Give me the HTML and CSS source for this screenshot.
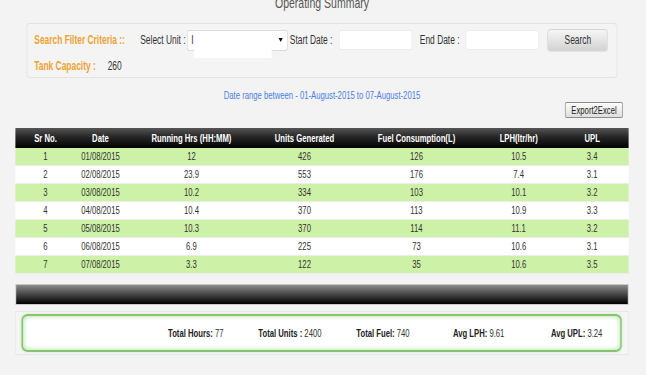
FILE: index.html
```html
<!DOCTYPE html>
<html lang="en">

<head>
    <meta charset="UTF-8">
    <meta name="viewport" content="width=device-width, initial-scale=1.0">
    <title>Operating Summary</title>
    <link rel="stylesheet" href="styles.css">
</head>

<body>
    <div class="page">
        <div class="page-title">Operating Summary</div>

        <div class="filter">
            <div class="filter-row">
                <span class="filter-label">Search Filter Criteria ::</span>
                <span class="field-label unit-label">Select Unit :</span>
                <div class="select">
                    <span class="select-text">I</span>
                    <span class="select-arrow"></span>
                    <div class="select-mask"></div>
                </div>
                <span class="field-label start-label">Start Date :</span>
                <input type="text" class="date-input">
                <span class="field-label end-label">End Date :</span>
                <input type="text" class="date-input">
                <button class="btn-search">Search</button>
            </div>
            <div class="filter-row tank-row">
                <span class="filter-label">Tank Capacity :</span>
                <span class="tank-value">260</span>
            </div>
        </div>

        <div class="date-range">Date range between - 01-August-2015 to 07-August-2015</div>

        <div class="export-row">
            <button class="btn-export">Export2Excel</button>
        </div>

        <div class="report-wrap">
            <table class="report">
                <colgroup>
                    <col style="width: 86px">
                    <col style="width: 71px">
                    <col style="width: 189px">
                    <col style="width: 134px">
                    <col style="width: 186px">
                    <col style="width: 106px">
                    <col style="width: 104px">
                </colgroup>
                <thead>
                    <tr>
                        <th>Sr No.</th>
                        <th>Date</th>
                        <th>Running Hrs (HH:MM)</th>
                        <th>Units Generated</th>
                        <th>Fuel Consumption(L)</th>
                        <th>LPH(ltr/hr)</th>
                        <th>UPL</th>
                    </tr>
                </thead>
                <tbody>
                    <tr><td>1</td><td>01/08/2015</td><td>12</td><td>426</td><td>126</td><td>10.5</td><td>3.4</td></tr>
                    <tr><td>2</td><td>02/08/2015</td><td>23.9</td><td>553</td><td>176</td><td>7.4</td><td>3.1</td></tr>
                    <tr><td>3</td><td>03/08/2015</td><td>10.2</td><td>334</td><td>103</td><td>10.1</td><td>3.2</td></tr>
                    <tr><td>4</td><td>04/08/2015</td><td>10.4</td><td>370</td><td>113</td><td>10.9</td><td>3.3</td></tr>
                    <tr><td>5</td><td>05/08/2015</td><td>10.3</td><td>370</td><td>114</td><td>11.1</td><td>3.2</td></tr>
                    <tr><td>6</td><td>06/08/2015</td><td>6.9</td><td>225</td><td>73</td><td>10.6</td><td>3.1</td></tr>
                    <tr><td>7</td><td>07/08/2015</td><td>3.3</td><td>122</td><td>35</td><td>10.6</td><td>3.5</td></tr>
                </tbody>
            </table>
        </div>

        <div class="report-foot"></div>

        <div class="totals">
            <div class="totals-box">
                <div class="total-item"><b>Total Hours:</b> 77</div>
                <div class="total-item"><b>Total Units :</b> 2400</div>
                <div class="total-item"><b>Total Fuel:</b> 740</div>
                <div class="total-item"><b>Avg LPH:</b> 9.61</div>
                <div class="total-item"><b>Avg UPL:</b> 3.24</div>
            </div>
        </div>
    </div>
</body>

</html>
```

FILE: styles.css
```css
html,
body {
    margin: 0;
    overflow: hidden;
    background: #f3f3f3;
}

body {
    font-family: "Liberation Sans", Arial, sans-serif;
    color: #333;
}

.page {
    display: flow-root;
    box-sizing: border-box;
    width: 923px;
    padding: 0 25px 0 22px;
    transform: scaleX(0.7);
    transform-origin: 0 0;
}

.page-title {
    margin-top: -6px;
    height: 17px;
    line-height: 17px;
    font-size: 15px;
    color: #555;
    text-align: center;
}

.filter {
    margin: 12px 16px 0;
    padding: 5px 10px 3px;
    border: 1px solid #e2e2e2;
    border-radius: 6px / 4px;
    background: #f4f4f4;
}

.filter .filter-row {
    display: flex;
    align-items: center;
    height: 22px;
    font-size: 12px;
}

.filter .tank-row {
    height: 16px;
    margin-top: 7px;
}

.filter .filter-label {
    font-weight: 700;
    color: #efa232;
}

.filter .unit-label {
    margin-left: 22px;
}

.filter .start-label {
    margin-left: 3px;
}

.filter .end-label {
    margin-left: 11px;
}

.filter .tank-value {
    margin-left: 17px;
}

.filter .select {
    position: relative;
    box-sizing: border-box;
    display: flex;
    align-items: center;
    width: 144px;
    height: 21px;
    margin-left: 2px;
    padding: 0 6px 0 5px;
    background: #fff;
    border: 1px solid #dcdcdc;
    border-radius: 4px / 3px;
}

.filter .select .select-text {
    flex: 1;
}

.filter .select .select-arrow {
    width: 0;
    height: 0;
    border-left: 3px solid transparent;
    border-right: 3px solid transparent;
    border-top: 4px solid #111;
}

.filter .select .select-mask {
    position: absolute;
    top: 0;
    left: 9px;
    width: 111px;
    height: 27px;
    background: #fff;
}

.filter .date-input {
    box-sizing: border-box;
    width: 105px;
    height: 20px;
    margin-left: 9px;
    padding: 0 4px;
    border: 1px solid #ececec;
    border-radius: 4px / 3px;
    background: #fff;
    outline: none;
}

.filter .btn-search {
    box-sizing: border-box;
    width: 86px;
    height: 22px;
    margin-left: 12px;
    padding: 0;
    font-family: inherit;
    font-size: 12px;
    color: #333;
    border: 1px solid #d6d6d6;
    border-radius: 5px / 4px;
    background: linear-gradient(#f6f6f6, #d3d3d3);
    box-shadow: 0 1px 1px rgba(0, 0, 0, 0.08);
}

.date-range {
    margin-top: 11px;
    height: 13px;
    line-height: 13px;
    font-size: 11px;
    color: #4b7fe3;
    text-align: center;
}

.export-row {
    display: flex;
    justify-content: flex-end;
    padding-right: 8px;
}

.export-row .btn-export {
    height: 16px;
    padding: 0 8px;
    font-family: inherit;
    font-size: 11px;
    line-height: 14px;
    color: #222;
    border: 1px solid #8c8c8c;
    border-radius: 3px / 2px;
    background: linear-gradient(#fdfdfd, #dedede);
}

/* header gradient and row stripes painted once, so no seams between cells */
.report-wrap {
    width: 876px;
    margin-top: 10px;
    background:
        linear-gradient(#555 0%, #262626 45%, #000 100%) 0 0 / 100% 20px no-repeat,
        repeating-linear-gradient(#cdf1a6 0 17px, #ececec 17px 18px, #fff 18px 35px, #ececec 35px 36px) 0 20px / 100% 100% no-repeat;
}

.report {
    width: 100%;
    table-layout: fixed;
    border-collapse: collapse;
    font-size: 11px;
}

.report th {
    height: 20px;
    padding: 0;
    line-height: 20px;
    font-weight: 700;
    color: #fff;
}

.report td {
    height: 18px;
    padding: 0 0 1px;
    box-sizing: border-box;
    line-height: 17px;
    text-align: center;
    color: #333;
}

.report-foot {
    box-sizing: border-box;
    height: 21px;
    margin-top: 10px;
    border: 1px solid #c8c8c8;
    background: linear-gradient(#8a8a8a, #000);
}

.totals {
    margin-top: 6px;
    padding: 2px 9px 2px 8px;
    border: 1px solid #e7e7e7;
    background: #f5f5f5;
}

.totals .totals-box {
    display: grid;
    grid-template-columns: 129px 140px 138px 140px auto;
    align-items: center;
    height: 34px;
    padding-left: 207px;
    border: 2px solid #84c670;
    border-radius: 9px / 6px;
    background: #fff;
    box-shadow: inset 0 0 6px #a8da98, 0 0 2px #b5dfa8;
    font-size: 11px;
    color: #333;
}

.totals .total-item b {
    color: #222;
}
```
